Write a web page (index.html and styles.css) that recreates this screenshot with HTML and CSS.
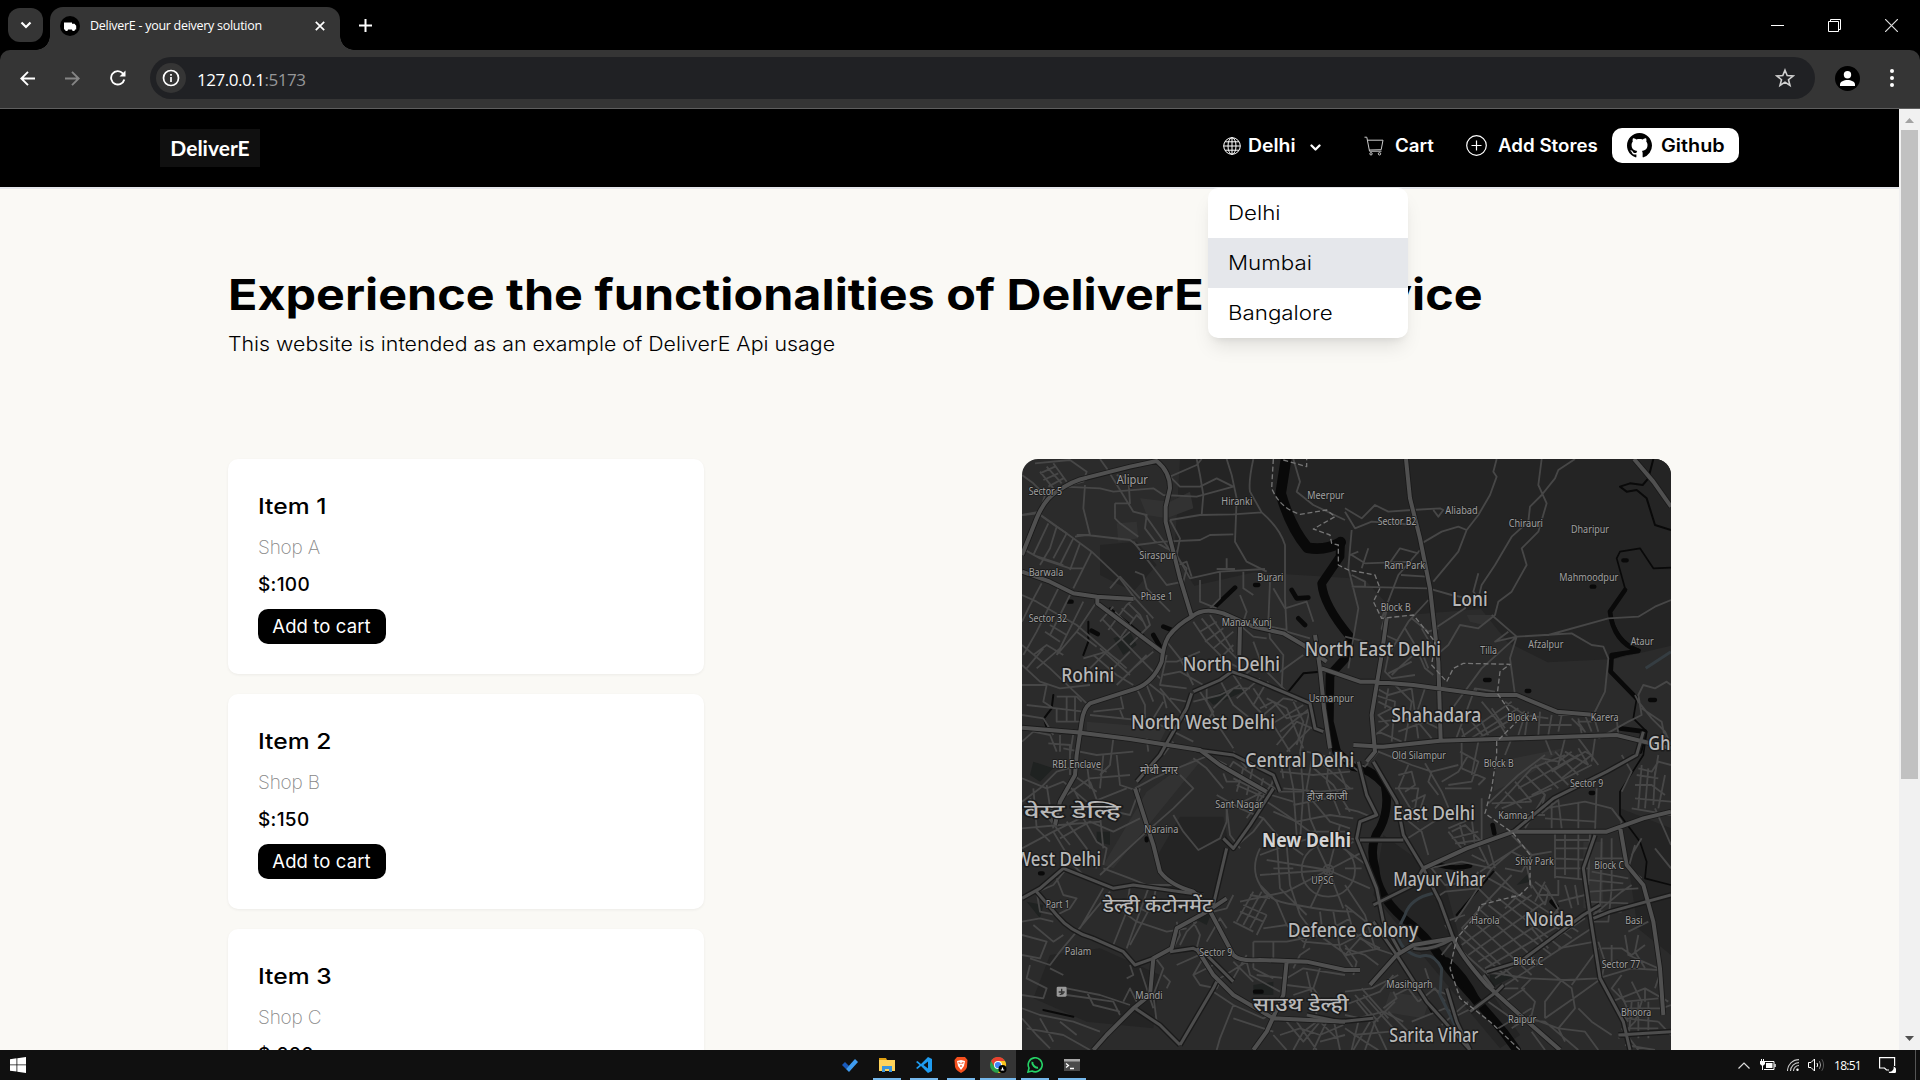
FILE: index.html
```html
<!DOCTYPE html>
<html lang="en">
<head>
<meta charset="utf-8">
<title>DeliverE - your deivery solution</title>
<link rel="stylesheet" href="styles.css">
</head>
<body>
<header class="tabstrip">
  <div class="tab-search"><svg width="12" height="8" viewBox="0 0 12 8"><path d="M1.500 1.500 6 6l4.500-4.500" fill="none" stroke="#fff" stroke-width="2.200"/></svg></div>
  <div class="tab">
    <svg class="favicon" width="20" height="20" viewBox="0 0 20 20"><circle cx="10" cy="10" r="10" fill="#000"/><path d="M4 6.500h8v1.200h2.500l1.700 2V13.500h-1.200a1.500 1.500 0 0 1-3 0H8a1.500 1.500 0 0 1-3 0H4z" fill="#fff"/></svg>
    <span class="tab-title">DeliverE - your deivery solution</span>
    <svg width="10" height="10" viewBox="0 0 10 10"><path d="M.8.8l8.400 8.400M9.200.8.8 9.200" stroke="#fff" stroke-width="1.700"/></svg>
  </div>
  <svg class="new-tab" width="13" height="13" viewBox="0 0 13 13"><path d="M6.500 0v13M0 6.500h13" stroke="#fff" stroke-width="2"/></svg>
  <div class="window-buttons">
    <svg width="13" height="13" viewBox="0 0 13 13"><path d="M0 6.500h13" stroke="#fff"/></svg>
    <svg width="13" height="13" viewBox="0 0 13 13"><path d="M.5 2.500h10v10H.5zM2.500 2.500v-2h10v10h-2" fill="none" stroke="#fff"/></svg>
    <svg width="13" height="13" viewBox="0 0 13 13"><path d="M0 0l13 13M13 0 0 13" stroke="#ddd" stroke-width="1.200"/></svg>
  </div>
</header>
<div class="toolbar">
  <svg class="back" width="15" height="15" viewBox="0 0 15 15"><path d="M15 7.500H1.500M8 .8 1.300 7.500 8 14.200" fill="none" stroke="#fff" stroke-width="1.900"/></svg>
  <svg class="forward" width="15" height="15" viewBox="0 0 15 15"><path d="M0 7.500h13.500M7 .8l6.700 6.700L7 14.200" fill="none" stroke="#858585" stroke-width="1.900"/></svg>
  <svg class="reload" width="16" height="16" viewBox="0 0 16 16"><path d="M14.300 9.500A6.700 6.700 0 1 1 12.800 3.300L14.500 5" fill="none" stroke="#fff" stroke-width="1.900"/><path d="M15.500.500v6h-6z" fill="#fff"/></svg>
  <div class="omnibox">
    <div class="site-info"><svg width="18" height="18" viewBox="0 0 18 18"><circle cx="9" cy="9" r="7.500" fill="none" stroke="#fff" stroke-width="1.700"/><path d="M9 8v5M9 5v1.800" stroke="#fff" stroke-width="1.700"/></svg></div>
    <span class="url">127.0.0.1<span class="port">:5173</span></span>
    <svg class="star" width="20" height="20" viewBox="0 0 20 20"><path d="M10 2.200l2.200 5.400 5.800.4-4.500 3.700 1.500 5.700-5-3.200-5 3.200 1.500-5.700L2 8l5.800-.4z" fill="none" stroke="#d0d0d0" stroke-width="1.600"/></svg>
  </div>
  <svg class="profile" width="25" height="25" viewBox="0 0 25 25"><circle cx="12.500" cy="12.500" r="12.500" fill="#000"/><circle cx="12.500" cy="8.700" r="3.700" fill="#fff"/><path d="M5 20v-1.500c0-3 4-4.500 7.500-4.500s7.500 1.500 7.500 4.500V20z" fill="#fff"/></svg>
  <svg class="menu" width="4" height="18" viewBox="0 0 4 18"><circle cx="2" cy="2" r="2" fill="#fff"/><circle cx="2" cy="9" r="2" fill="#fff"/><circle cx="2" cy="16" r="2" fill="#fff"/></svg>
</div>
<div class="viewport">
  <div class="page">
    <nav class="navbar">
      <div class="logo">DeliverE</div>
      <div class="location">
        <svg width="18" height="18" viewBox="0 0 18 18" fill="none" stroke="#fff"><circle cx="9" cy="9" r="8.300"/><ellipse cx="9" cy="9" rx="4" ry="8.300"/><path d="M9 .7v16.600M.7 9h16.600M2 4.800h14M2 13.200h14"/></svg>
        <span class="nav-delhi">Delhi</span>
        <svg class="chevron" width="11" height="8" viewBox="0 0 11 8"><path d="M1.500 1.500l4 4 4-4" fill="none" stroke="#fff" stroke-width="2.300" stroke-linecap="round" stroke-linejoin="round"/></svg>
        <div class="dropdown">
          <div class="option"><span>Delhi</span></div>
          <div class="option active"><span>Mumbai</span></div>
          <div class="option"><span>Bangalore</span></div>
        </div>
      </div>
      <div class="cart">
        <svg width="20" height="20" viewBox="0 0 20 20" fill="none" stroke="#ccc"><path d="M.5 1.200h2.300l2.700 14h12M3.500 4.200h15.500l-1.800 9.500-12 .3"/><circle cx="7" cy="17.800" r="1.200"/><circle cx="15.500" cy="17.800" r="1.200"/></svg>
        <span class="nav-cart">Cart</span>
      </div>
      <div class="add-stores">
        <svg width="21" height="21" viewBox="0 0 21 21" fill="none" stroke="#fff" stroke-width="1.200"><circle cx="10.500" cy="10.500" r="9.800"/><path d="M10.500 5.500v10M5.500 10.500h10"/></svg>
        <span class="nav-add">Add Stores</span>
      </div>
      <a class="github">
        <svg width="25" height="25" viewBox="0 0 16 16"><path d="M8 0C3.580 0 0 3.580 0 8c0 3.540 2.290 6.530 5.470 7.590.4.070.55-.17.55-.38 0-.19-.01-.82-.01-1.490-2.010.37-2.530-.49-2.690-.94-.09-.23-.48-.94-.82-1.130-.28-.15-.68-.52-.01-.53.63-.01 1.080.58 1.230.82.72 1.210 1.870.87 2.330.66.070-.52.28-.87.51-1.070-1.780-.2-3.640-.89-3.640-3.950 0-.87.31-1.590.82-2.150-.08-.2-.36-1.020.08-2.120 0 0 .67-.21 2.200.82.64-.18 1.320-.27 2-.27s1.360.09 2 .27c1.530-1.040 2.200-.82 2.200-.82.44 1.100.16 1.920.08 2.120.51.56.82 1.270.82 2.150 0 3.070-1.870 3.750-3.650 3.950.29.25.54.73.54 1.480 0 1.070-.01 1.930-.01 2.200 0 .21.15.46.55.38A8.010 8.010 0 0 0 16 8c0-4.420-3.580-8-8-8z"/></svg>
        <span class="nav-github">Github</span>
      </a>
    </nav>
    <main class="content">
      <h1>Experience the functionalities of DeliverE Api service</h1>
      <p class="subtitle">This website is intended as an example of DeliverE Api usage</p>
      <div class="columns">
        <div class="items">
          <article class="card">
            <h2>Item 1</h2>
            <p class="shop">Shop A</p>
            <p class="price">$:100</p>
            <button class="add">Add to cart</button>
          </article>
          <article class="card">
            <h2>Item 2</h2>
            <p class="shop">Shop B</p>
            <p class="price">$:150</p>
            <button class="add">Add to cart</button>
          </article>
          <article class="card">
            <h2>Item 3</h2>
            <p class="shop">Shop C</p>
            <p class="price">$:200</p>
            <button class="add">Add to cart</button>
          </article>
        </div>
        <svg class="map" width="649" height="591" viewBox="6 12 1947 1773">
          <rect x="6" y="12" width="1947" height="1773" fill="#2b2b2b"/>
          <g class="land">
            <path d="M480 12h1473v560l-170 40-200 10-120-60-80-100-250 20-100-110-330-20-180 40-60-90zM240 270l110-10 60 70-70 80-100-50zM480 1085l130 0 20 100-60 190-100-30-60-140zM90 1500l150-20 180 80-20 160-200-20-160-70zM1090 1140l180 130 60 220 170 250-60 40-250-300-130-160zM1800 1060l153 60v380l-100-80z"/>
          </g>
          <g class="builtup">
            <path d="M360 130l90 10 60-30 10 50-80 30-60-10zM290 205l60-5 5 50-60 10zM200 800l240 20-20 40-220-20zM380 1010l140-100 20 10-260 320-30-10zM1340 480l80 0-30 30-40-10zM1430 920l200-40-90 70-120 60zM1110 1610l120 20-20 60-120-20zM1690 1160l60 0 0 200-60 0z"/>
          </g>
          <g class="park">
            <path d="M280 550l50-20 20 40-40 30zM560 730l100-40 10 20-90 40zM40 920l60 20-40 40-30-20zM230 1130l40 0 0 40-40-10zM520 1390l60-30-20 50zM700 1590l60-10 0 40-60 0zM20 1340l50 10-10 40zM1410 1560l80 0-80 40zM1490 1290l40-40 0 30z"/>
          </g>
          <g class="water">
            <path d="M800 0L782 115Q810 215 862 278Q915 288 962 262" stroke-width="32"/>
            <path d="M962 258L960 305L905 385Q910 450 990 545L985 600L930 660L928 800L950 890L1000 935Q1050 940 1095 990Q1110 1060 1080 1120Q1045 1170 1065 1240Q1070 1320 1150 1390Q1220 1440 1270 1520Q1300 1560 1345 1610Q1400 1670 1450 1730L1490 1785" stroke-width="26"/>
            <path d="M1280 1520Q1330 1560 1370 1640" stroke-width="26"/>
            <path d="M585 455L645 398M400 540l20 35M215 527l18 10M815 405L830 430L865 428M835 490L855 510M1250 1228Q1300 1245 1350 1232M1595 1340l15 15M1418 1110l5 25M430 515l25 10" stroke-width="14"/>
            <path d="M145 440h10M705 390h10M1395 675h14M1520 708h8M1810 316h10M1715 395h8M1712 1014h8M60 1255h8M705 1610h20M380 1150v6M1890 735h15M1230 1655l8 14" stroke-width="13"/>
            <path d="M1900 12L1885 70L1868 90L1830 85L1800 95L1820 110L1850 105L1880 130L1905 210L1953 225" stroke-width="6"/>
            <path d="M1953 338L1900 340L1860 280L1800 290L1790 310L1815 400L1770 470Q1790 560 1860 585L1775 610L1775 655L1850 730L1840 790L1880 830L1870 900L1800 1010L1800 1080L1860 1160L1880 1220L1875 1270L1953 1290" stroke-width="5"/>
            <path d="M1815 405L1770 470Q1780 560 1855 588L1775 600L1772 650L1850 730M1800 820L1875 830L1860 890" stroke-width="14"/>
            <path d="M205 500L205 560L190 600M270 460L370 540M100 720L95 760L72 790L80 820M805 710L850 655L900 650M70 1665l90 20M1310 1380l110-130" stroke-width="6"/>
          </g>
          <g class="minor">
            <path d="M6 60L40 85L75 120L60 170L6 180M45 25L150 15L200 50L190 80L130 95M60 50L100 100M80 35L125 85M100 25L140 80M60 55L105 35M70 75L115 55M85 95L130 70M130 95L240 100L280 110L400 100L430 120L530 125L640 95L590 70L540 95L480 95L450 65L530 30L545 12"/>
            <path d="M240 12L260 40L340 170L380 180L375 220L405 260L440 280L470 290M285 145L330 145L325 70L290 60M285 145L285 190L300 205L355 245M195 90L190 160L210 240L170 240M6 180L55 175L160 250L215 290L300 370L345 430M165 245L200 240L330 255L350 270L430 260L540 255L570 240L640 238M450 195L540 180L640 178L725 172L690 110Q685 80 700 12M620 12L635 60L650 130L645 260L680 320L740 350M725 172Q780 220 795 270L795 430L800 525L750 515"/>
            <path d="M60 180L110 215L90 280L60 330M110 215L140 235L100 310M85 205L40 300M160 250L120 330M180 265L150 345M215 290L160 400M6 280L60 310L150 340L190 340M40 300L130 330M6 420L50 440L100 470L170 510L320 640M65 385L30 450L6 500M115 400L50 530L10 600M150 420L90 540M190 440L120 580L50 640M230 440L170 530L110 600M6 570L90 640L200 745M6 630L60 680L120 700L210 690M40 600L80 570L130 600M90 510L140 540L110 600M75 530L120 560M20 640L70 580M170 530L230 575M190 610L260 590L300 620"/>
            <path d="M245 490L370 620L420 670M285 470L400 580M240 500L280 455M265 525L320 450L345 430L400 490M300 550L350 480L370 500M330 570L390 510L380 480M220 600L290 660L340 690M240 580L330 660M210 640L260 590L330 530M250 670L330 590M290 690L380 600M340 640L400 590M305 460L340 490M325 445L360 480L380 520M375 180L460 300L500 340L490 380L440 390L340 260M345 350L370 360L380 400L450 470M270 400L300 365L360 430"/>
            <path d="M450 195L480 250L470 300L510 370L600 350L735 342M540 375L540 440L590 460M600 350L600 430L570 460M670 350L670 400L700 420M750 380L745 500L750 550L790 600L785 700M760 400L795 460L860 440L880 500M800 530L870 550M660 420L680 470L665 515L700 545L740 550M620 310L620 345M590 342L645 342M475 330L500 320L515 365M530 12L540 60L550 120L545 180M820 12L840 80L830 110L880 150L975 195"/>
            <path d="M520 500L560 560L620 620L660 640M545 490L600 560L650 610M570 480L610 540L640 590M540 530L590 500M555 560L610 520M580 580L640 530M600 610L640 570M440 560L480 610L500 650L520 690M425 620L470 620L540 590M430 660L480 650L550 690M380 680L430 720L440 760M380 690L400 740M300 715L310 760L220 770M350 700L375 750L375 790M440 600L420 690L500 700M420 700L480 770L500 800M450 730L500 740"/>
            <path d="M640 660L700 750L760 810L810 890M600 675L640 750L690 790M560 690L560 740L600 820L640 880M540 710L580 770L560 800M520 740L600 720L660 690M580 760L640 700L690 700M650 730L720 670M700 750L735 690L745 680M730 780L790 730L820 735M750 810L850 750M780 830L870 760M660 670L700 640L780 650L850 600M700 560L730 640L790 700L830 740M740 730L800 760L850 880M720 760L760 740L800 790L870 770M700 700L740 760M820 740L850 800L830 870M870 760L840 890M770 870L830 800L900 830M800 890L870 820"/>
            <path d="M6 860L40 830L90 840L110 890M20 750L110 760L190 770M110 725L170 725L185 740M110 760L110 800L180 800M140 725L140 800M165 725L165 800M6 690L80 690L70 740L100 760M6 780L70 790L100 840M85 865L150 870L150 960M120 840L120 890M160 835L150 900M210 780L400 800L520 860M300 765L310 790M380 850L385 890M400 790L430 740M280 850L270 930L240 960M460 860L430 900"/>
            <path d="M6 970L80 1000L130 980L200 1040L270 1060M6 1040L60 1000L110 950L180 930L260 950M30 1030L60 1080L110 1060M6 1120L120 1110L240 1100M40 1000L50 1120L90 1160M80 990L100 1120M6 1180L100 1130L180 1090M100 1130L160 1230L200 1270M140 1100L200 1180L230 1240M190 1090L230 1160L260 1180L250 1230M240 1080L250 1180M70 1070L150 1170M120 1150L210 1100L280 1130L360 1090M160 1000L200 1080M210 980L240 1060L330 1080L360 1000M200 920L210 1000M250 900L240 1000M290 900L300 990L360 1010M160 960L230 1010M140 1020L210 970L330 960M170 1060L320 1000M130 880L230 900L340 890"/>
            <path d="M345 1000L400 970L470 940L570 900M380 1130L460 1060L520 1000L480 960M460 1080L490 1130L535 1185L600 1150L620 1100L620 1040M240 1260L380 1130M250 1240L330 1270L380 1290L460 1290M200 1270L140 1240L100 1290L6 1330M110 1270L130 1320L170 1330L150 1360L110 1380M50 1310L60 1370L110 1380M6 1400L60 1390L100 1400M6 1440L80 1460L60 1510L6 1500M40 1410L100 1460L130 1440M250 1300L180 1420M270 1310L120 1490L90 1530L30 1510M330 1290L320 1370L280 1470M385 1300L320 1480M410 1290L400 1340L330 1470M310 1370L350 1400L440 1430L500 1420M340 1350L380 1370"/>
            <path d="M30 1530L20 1570L80 1600L70 1630L6 1620M90 1540L130 1560M140 1600L240 1620L330 1650M140 1620L280 1640L300 1680M200 1610L220 1650L300 1670M6 1660L60 1680L160 1700L240 1730M6 1690L50 1740L90 1780M60 1690L100 1760M20 1720L130 1740L210 1785M120 1700L170 1740M310 1640L330 1600L350 1640M330 1530L340 1560L320 1570M400 1500L430 1540L400 1620L410 1700M360 1540L380 1600L400 1660M430 1560L450 1580L440 1600"/>
            <path d="M620 950L640 920L700 960L780 1010L850 1010M640 970L720 1010L820 1040M650 990L740 1030M670 940L650 1010M700 930L680 1020M730 970L710 1040M760 970L740 1040M590 1020L660 1060L730 1090L700 1130L640 1180M620 1060L630 1140L660 1180M650 1050L730 1010M680 1090L760 980M610 1000L560 940L520 910M610 955L620 980L660 980M730 1090L780 1150L850 1200M740 1040L800 1080L870 1130L975 1130M560 900L620 930M640 890L680 940"/>
            <path d="M800 900L820 1000L830 1140M840 890L850 1010L840 1160M880 890L860 1000L870 1090L900 1160M930 890L920 980L960 1080M780 950L880 960L990 950M790 1000L900 1010L1000 1000M820 1050L970 1020M760 1070L830 1100L930 1080L1000 1090M900 920L990 1000M870 930L940 990L990 1070M860 890L980 920L1030 960L1040 1010M940 900L980 1000M780 900L790 970M880 1040L930 1100L990 1120"/>
            <path d="M925 1245m-80 0a80 80 0 1 0 160 0a80 80 0 1 0-160 0M925 1245m-15 0a15 15 0 1 0 30 0a15 15 0 1 0-30 0M925 1245L740 1215M925 1245L720 1260M925 1245L800 1310L660 1340M925 1245L880 1150M925 1245L960 1110M925 1245L1030 1190M925 1245L1050 1300M925 1245L970 1360M925 1245L870 1360M720 1180Q690 1240 720 1290Q740 1340 830 1350Q930 1370 1000 1370M800 1170L810 1290L840 1380M770 1150L780 1300L860 1380M720 1200L800 1170L870 1150M720 1290L770 1340L800 1410M820 1240L760 1240M1000 1160L970 1180L1040 1230"/>
            <path d="M700 1310L650 1400M725 1310L670 1410M745 1320L690 1420M740 1380L710 1440M690 1320L750 1330M670 1350L740 1380M660 1370L730 1400M640 1400L700 1430M640 1320L620 1360L580 1370M700 1460L700 1540M760 1460L760 1510M730 1420L800 1410L850 1460L960 1470L1040 1430M700 1460L800 1460L900 1440L990 1390M840 1380L870 1420L850 1480M900 1370L910 1450L980 1500L1080 1480M940 1370L960 1480L1000 1540M980 1360L1000 1430L1060 1480M870 1480L840 1500L820 1540"/>
            <path d="M480 1470L500 1430L530 1400M520 1400L540 1440L530 1480M560 1460L600 1390L620 1420M470 1530L560 1490L520 1560L540 1590L590 1600L600 1580M520 1560L580 1530M460 1480L480 1440L470 1400M600 1570L680 1520L690 1560L780 1610M640 1520L700 1580M680 1500L640 1570M700 1540L760 1570M640 1650L600 1750L590 1785M580 1610L640 1650L730 1690L800 1650L850 1640M640 1690L760 1730M710 1560L800 1570L850 1540L975 1560M800 1590L880 1600L920 1660L975 1640M820 1620L880 1600L900 1540M860 1550L890 1680"/>
            <path d="M800 1700L850 1760L900 1700L950 1750M780 1740L840 1720L900 1740L970 1710M820 1785L850 1730L890 1700M880 1785L920 1700M830 1700L890 1785M940 1690L960 1785M760 1740L800 1785M900 1760L975 1740M975 1650L1080 1610L1120 1560M975 1700L1090 1670L1150 1700M1010 1640L1060 1700L1100 1785M1030 1620L1120 1720M1000 1740L1110 1730M1000 1785L1050 1700M1090 1660L1130 1630L1120 1610M975 1470L1010 1520L1000 1560M975 1500L1020 1450L1080 1480"/>
          </g>
          <g class="minor" transform="translate(975 0)">
            <path d="M455 12L445 50L455 65L435 120L400 180L365 225L340 290L290 350L265 380M590 12L580 90L605 145L580 230L530 280L545 330L500 410L460 440L450 480L400 520L345 510L310 570L275 600M690 12L640 45L630 70L590 120L555 155L550 200L500 245L450 330L410 390L400 430M0 160L50 190L90 150L130 170L200 165L285 160L295 165L280 185L265 165M0 170L30 220L80 200L210 210M20 225L10 340L40 460L10 640M20 300L60 325L200 320M70 280L50 340M15 300L40 290M230 265L290 230L340 215L365 225M130 330L165 280L220 295M20 395L250 400L320 420L370 430L360 460L270 520M20 360L60 380L60 395L20 395"/>
            <path d="M225 285L160 360L110 490M110 490L130 450L110 520L120 540L230 590L250 640M250 435L190 500L130 600L120 650L140 670L210 660M180 520L210 570L240 640L265 660M200 490L250 530L280 520M230 520L270 590M140 660L160 640L250 560M130 655L200 620M400 355L385 410L400 430M440 480L515 545L600 540L680 535L740 570L775 575L790 610L780 710L745 780L760 830M515 545L495 610L510 720M515 545L450 560L490 530M515 545L410 640L300 790M610 540L790 490L880 485L930 455L978 435M395 700L390 715M350 820L360 850M168 360L245 365M0 545L60 560"/>
            <path d="M350 845L500 740M370 855L520 760M400 850L540 770M330 860L390 700L450 710M410 740L460 800L490 850M440 760L480 820M400 780L430 840M480 740L540 780L520 840M380 800L420 850M550 770L540 840M585 770L580 840M620 780L610 840M580 810L680 810M650 780L640 830M680 790L720 830L700 800L740 800M700 790L710 835M540 780L610 790M640 780L720 780L740 830M95 700L130 720L200 700M100 740L140 760L100 780L130 810L90 840M130 700L120 760M150 690L200 740L180 860M200 700L220 850M240 700L210 790L260 850M90 720L150 740L140 860M100 800L200 790M160 830L240 800L280 820M100 830L170 860"/>
            <path d="M760 850L850 800L890 780L880 720L895 690L930 700L965 680L978 690M870 720L880 740L920 790L960 830L978 870M890 760L950 800L960 850M815 790L820 840M600 850L620 900M660 850L640 930M700 850L760 930M750 850L740 920M500 850L480 900M350 860L350 940M400 860L380 960"/>
            <path d="M0 910L60 935L100 890L200 930L260 950L340 930M240 925L290 1010L320 1080M260 950L250 980L280 1020M190 930L160 1000L220 1100M160 960L200 950L210 990L180 1010M150 1000L220 1000L210 1060L170 1070M345 890L400 920L380 980L310 990M350 940L420 970L400 990M290 980L340 950L370 900M300 1000L380 1000M200 1040L240 1020L220 1080M180 1090L230 1130L250 1200M180 1155L330 1060M320 1130L360 1110L410 1160M310 1120L380 1090L390 1170M345 1110L360 1170M320 1150L400 1130M330 1165L405 1155M310 1130L350 1180"/>
            <path d="M430 1045L520 960L600 900M450 1060L560 940L660 900M440 1045L560 1040M470 1060L620 1000M480 1010L530 1060M510 980L560 1040M540 960L600 1020M570 930L640 1000M600 920L670 990M630 890L700 960M660 890L730 930M520 1000L700 900M560 1020L740 930M590 910L640 920L680 890M620 950L720 890L740 900M650 970L740 900M700 880L730 930M600 1060L720 1040L800 1060M590 1075L640 1035L650 1120M600 1090L750 1100M620 1040L620 1120M700 1040L700 1120M755 1000L750 1130M545 1080L600 1080M410 1030L410 1170"/>
            <path d="M630 1135L630 1270M660 1135L660 1260M700 1135L700 1270M735 1135L730 1290M770 1150L765 1380M800 1150L800 1300M630 1155L750 1155M630 1180L735 1180M630 1210L735 1215M630 1240L735 1240M630 1265L835 1285M720 1340L850 1345M740 1370L830 1370M735 1310L880 1300M750 1210L840 1210M740 1250L850 1270M745 1380L830 1310L860 1290M800 1300L790 1400L740 1400M640 1275L640 1320L580 1320M570 1280L610 1310L600 1350M600 1280L570 1340"/>
            <path d="M405 1250L530 1170M440 1240L500 1190L540 1210L560 1300M450 1250L520 1320L480 1360M430 1270L540 1330M330 1400L440 1240M350 1420L500 1260M260 1240L300 1290L380 1280L400 1250M250 1240L350 1220L440 1240M480 1240L530 1250L560 1200M500 1140L560 1200L620 1190M400 1170L430 1230M430 1170L450 1240M380 1200L420 1220M270 1330L300 1310L400 1300L440 1340"/>
            <path d="M350 1420L520 1580M375 1390L560 1560M400 1360L590 1530M430 1350L620 1500M460 1330L650 1480M500 1320L680 1450M530 1320L700 1430M350 1470L560 1320M370 1500L600 1340M400 1520L640 1370M420 1540L680 1390M450 1570L720 1390M480 1590L740 1420M330 1470L430 1560M340 1440L480 1560M600 1290L640 1360L610 1400M560 1290L600 1350M640 1340L720 1320M660 1290L680 1360M690 1290L700 1350M560 1420L610 1480M300 1410L330 1450L290 1500M300 1400L360 1380"/>
            <path d="M420 1550L550 1570L660 1575L760 1570L860 1540L940 1545M560 1570L530 1600L570 1640L560 1680L500 1720M520 1600L460 1600L440 1620M600 1540L680 1600L690 1660L640 1720L660 1760M640 1480L750 1460M680 1590L760 1480M600 1690L700 1620L770 1570L800 1640L850 1700M700 1660L740 1700L800 1740M650 1575L600 1640L600 1690M560 1690L640 1720M460 1720L560 1660M480 1640L540 1600M430 1640L500 1690L600 1700L700 1785M640 1720L720 1730L760 1785M560 1730L600 1785M770 1480L830 1480L860 1500L900 1470M800 1470L800 1540M840 1440L850 1500L940 1540M880 1440L870 1490L900 1540M760 1460L780 1520L770 1570M850 1430L910 1400M830 1560L800 1600L840 1640L940 1630"/>
            <path d="M800 1640L900 1600L970 1640M860 1580L890 1640L870 1700M820 1600L860 1690M830 1660L950 1660M840 1690L940 1700M850 1720L940 1720M860 1640L850 1760M880 1640L880 1750M910 1640L910 1750M820 1750L870 1700M830 1720L880 1785M900 1600L900 1640M840 1770L930 1785M930 1600L950 1540M940 1700L978 1740M950 1660L978 1650"/>
            <path d="M880 940L920 950L940 920L978 930M870 990L920 990L960 1020M890 930L880 1060M910 940L900 1060M930 950L925 1050M875 960L940 970M870 1030L978 1040M860 1060L978 1080M940 900L930 960M830 900L860 950L830 1010M960 960L940 1060M870 1170L850 1240L890 1270M800 1060L830 1100L820 1130M930 1060L978 1170M930 1180L978 1240M860 1200L890 1150M540 1120L600 1020L590 1060"/>
            <path d="M0 1060L40 1070L90 1090M0 1150L80 1155M0 1240L50 1240M0 1290L60 1380L90 1480L150 1500M0 1350L100 1430M0 1480L60 1500L100 1530M160 1560L80 1600L0 1610M0 1680L90 1700L150 1640M30 1620L100 1700M50 1600L130 1690M0 1720L60 1760L100 1785M40 1700L20 1785M90 1700L60 1785M130 1670L200 1740M150 1620L190 1600L220 1640M200 1700L300 1660L340 1680L420 1640M220 1640L270 1600L300 1640M290 1710L370 1640M240 1540L260 1600L310 1620"/>
          </g>
          <g class="canal">
            <path d="M1240 1315Q1170 1330 1155 1380L1130 1430Q1140 1490 1200 1505Q1240 1490 1265 1540L1260 1620L1320 1740"/>
            <path d="M1877 640L1953 590"/>
          </g>
          <g class="casing">
            <path id="trunks" d="M6 300L50 190Q75 130 110 110Q160 75 200 68L330 35L410 18Q450 50 450 100L437 155L437 200L465 310L480 370L515 485Q470 510 445 545Q430 570 425 620Q400 680 350 700L210 745Q190 760 185 800L170 900L165 960L120 1040L105 1110M515 485Q550 455 610 475L700 515L790 535L850 570L920 620M1158 12L1170 130L1200 250L1230 400L1255 620L1262 855M1842 12L1900 80L1953 155M1100 490L1085 600L1055 780L1065 890L1040 920M6 818L170 832L330 852L540 885L600 930L740 1010M885 540L900 640L912 760L930 880M905 640L1020 680L1060 680L1180 690L1400 720L1490 720L1610 770L1725 780M1000 870L1090 875L1260 857L1500 850L1790 840L1953 880M345 1000L400 1170L420 1250Q450 1290 520 1310L560 1350L640 1500Q660 1520 720 1515L860 1520L975 1545L1020 1545M220 1785L260 1740L300 1700L340 1660L390 1620L400 1510L455 1480L470 1420L560 1370L620 1330M800 1520L790 1620L740 1730L700 1785M1210 1240L1340 1180L1480 1130L1760 1130L1870 1090L1953 1070M1800 1115L1820 1230L1870 1290L1900 1400L1920 1540L1930 1680M530 1480L580 1560L640 1620L760 1690L975 1700M1050 1590L1130 1500L1180 1470L1300 1450Q1320 1500 1400 1590L1500 1680L1620 1785M6 350L90 380L160 415L230 425L340 432M232 430L232 445L425 590M660 515L658 600"/>
            <path id="arteries" d="M515 715L500 760L420 900L350 980M520 710L600 675L635 650L680 665L800 715L870 745L885 820L910 830M6 1330L60 1300L130 1240L280 1300L340 1290L550 1320M50 1310L110 1380Q150 1430 220 1450L310 1490L345 1530L400 1510M480 1770L580 1600L590 1580M345 1660L420 1710L480 1770M1015 920L1040 1020L1070 1080L1020 1100L1010 1150L1070 1300L1090 1400L1140 1490M1060 920L1130 1040L1150 1140L1210 1240L1260 1340L1300 1450M1020 1155L1150 1155M1060 1350L1180 1290L1210 1240M1400 1550L1500 1520L1690 1380L1740 1350M1390 1560L1420 1600M1725 1140L1690 1240L1710 1380L1740 1570M1720 1390L1770 1370L1953 1320M1480 1130L1600 1030L1760 950L1850 900L1870 830M1350 1670L1430 1610L1450 1590M1060 1400L1130 1500L1220 1640L1350 1785M1180 1480Q1230 1490 1300 1450M1280 1600L1310 1700L1350 1785M610 1150L640 1180L690 1110L760 1000M620 1180L580 1350M450 1490L520 1480L560 1500L640 1580M860 1680L960 1700L1060 1690M530 885L640 900L760 960L780 1010M1740 1570L1810 1700L1830 1785M1795 1740L1953 1730"/>
          </g>
          <use href="#trunks" class="trunk"/>
          <use href="#arteries" class="artery"/>
          <g class="boundary">
            <path d="M760 12L755 100Q780 160 840 178L920 165L945 185L880 222L930 240L935 265L955 270L955 330L985 345L1065 360L1080 400L1060 440L1085 490L1180 480L1245 560L1235 630L1280 680L1300 640L1330 625L1470 628L1440 650L1432 715L1490 800L1430 860L1430 900L1415 1000L1395 1075L1480 1135L1530 1200L1530 1290L1500 1320L1380 1350L1370 1380L1310 1450L1290 1540L1320 1630L1410 1700L1500 1785M790 15L860 35V12"/>
          </g>
          <rect x="110" y="1595" width="30" height="30" rx="4" fill="#9a9a9a"/>
          <path d="M116 1611h18M125 1601v18M119 1619l12-4" stroke="#333" stroke-width="4"/>
          <g class="places">
            <text x="290" y="87" textLength="94" lengthAdjust="spacingAndGlyphs" class="mid">Alipur</text>
            <text x="26" y="119" textLength="100" lengthAdjust="spacingAndGlyphs">Sector 5</text>
            <text x="604" y="149" textLength="93" lengthAdjust="spacingAndGlyphs">Hiranki</text>
            <text x="862" y="131" textLength="111" lengthAdjust="spacingAndGlyphs">Meerpur</text>
            <text x="358" y="312" textLength="107" lengthAdjust="spacingAndGlyphs">Siraspur</text>
            <text x="26" y="362" textLength="104" lengthAdjust="spacingAndGlyphs">Barwala</text>
            <text x="712" y="379" textLength="78" lengthAdjust="spacingAndGlyphs">Burari</text>
            <text x="362" y="435" textLength="96" lengthAdjust="spacingAndGlyphs">Phase 1</text>
            <text x="26" y="501" textLength="115" lengthAdjust="spacingAndGlyphs">Sector 32</text>
            <text x="605" y="514" textLength="150" lengthAdjust="spacingAndGlyphs">Manav Kunj</text>
            <text x="866" y="741" textLength="135" lengthAdjust="spacingAndGlyphs">Usmanpur</text>
            <text x="1276" y="177" textLength="97" lengthAdjust="spacingAndGlyphs">Aliabad</text>
            <text x="1073" y="209" textLength="116" lengthAdjust="spacingAndGlyphs">Sector B2</text>
            <text x="1466" y="215" textLength="103" lengthAdjust="spacingAndGlyphs">Chirauri</text>
            <text x="1653" y="234" textLength="114" lengthAdjust="spacingAndGlyphs">Dharipur</text>
            <text x="1093" y="343" textLength="122" lengthAdjust="spacingAndGlyphs">Ram Park</text>
            <text x="1618" y="379" textLength="177" lengthAdjust="spacingAndGlyphs">Mahmoodpur</text>
            <text x="1082" y="467" textLength="90" lengthAdjust="spacingAndGlyphs">Block B</text>
            <text x="1381" y="598" textLength="50" lengthAdjust="spacingAndGlyphs">Tilla</text>
            <text x="1525" y="578" textLength="105" lengthAdjust="spacingAndGlyphs">Afzalpur</text>
            <text x="1832" y="571" textLength="69" lengthAdjust="spacingAndGlyphs">Ataur</text>
            <text x="1462" y="798" textLength="89" lengthAdjust="spacingAndGlyphs">Block A</text>
            <text x="1712" y="798" textLength="84" lengthAdjust="spacingAndGlyphs">Karera</text>
            <text x="97" y="938" textLength="146" lengthAdjust="spacingAndGlyphs">RBI Enclave</text>
            <text x="360" y="958" textLength="114" lengthAdjust="spacingAndGlyphs">मोथी नगर</text>
            <text x="860" y="1035" textLength="123" lengthAdjust="spacingAndGlyphs">हौज़ काजी</text>
            <text x="586" y="1059" textLength="143" lengthAdjust="spacingAndGlyphs">Sant Nagar</text>
            <text x="373" y="1134" textLength="102" lengthAdjust="spacingAndGlyphs">Naraina</text>
            <text x="874" y="1286" textLength="67" lengthAdjust="spacingAndGlyphs">UPSC</text>
            <text x="77" y="1358" textLength="72" lengthAdjust="spacingAndGlyphs">Part 1</text>
            <text x="134" y="1500" textLength="80" lengthAdjust="spacingAndGlyphs">Palam</text>
            <text x="538" y="1503" textLength="99" lengthAdjust="spacingAndGlyphs">Sector 9</text>
            <text x="346" y="1633" textLength="82" lengthAdjust="spacingAndGlyphs">Mandi</text>
            <text x="1115" y="913" textLength="163" lengthAdjust="spacingAndGlyphs">Old Silampur</text>
            <text x="1391" y="935" textLength="90" lengthAdjust="spacingAndGlyphs">Block B</text>
            <text x="1650" y="995" textLength="100" lengthAdjust="spacingAndGlyphs">Sector 9</text>
            <text x="1435" y="1093" textLength="110" lengthAdjust="spacingAndGlyphs">Kamna 1</text>
            <text x="1486" y="1229" textLength="115" lengthAdjust="spacingAndGlyphs">Shiv Park</text>
            <text x="1723" y="1242" textLength="89" lengthAdjust="spacingAndGlyphs">Block C</text>
            <text x="1354" y="1408" textLength="85" lengthAdjust="spacingAndGlyphs">Harola</text>
            <text x="1816" y="1407" textLength="52" lengthAdjust="spacingAndGlyphs">Basi</text>
            <text x="1480" y="1531" textLength="90" lengthAdjust="spacingAndGlyphs">Block C</text>
            <text x="1745" y="1539" textLength="116" lengthAdjust="spacingAndGlyphs">Sector 77</text>
            <text x="1099" y="1599" textLength="139" lengthAdjust="spacingAndGlyphs">Masihgarh</text>
            <text x="1464" y="1703" textLength="85" lengthAdjust="spacingAndGlyphs">Raipur</text>
            <text x="1803" y="1684" textLength="91" lengthAdjust="spacingAndGlyphs">Bhoora</text>
          </g>
          <g class="districts">
            <text x="124" y="682" textLength="159" lengthAdjust="spacingAndGlyphs">Rohini</text>
            <text x="488" y="648" textLength="292" lengthAdjust="spacingAndGlyphs">North Delhi</text>
            <text x="333" y="822" textLength="432" lengthAdjust="spacingAndGlyphs">North West Delhi</text>
            <text x="854" y="602" textLength="409" lengthAdjust="spacingAndGlyphs">North East Delhi</text>
            <text x="1296" y="453" textLength="107" lengthAdjust="spacingAndGlyphs">Loni</text>
            <text x="1114" y="801" textLength="270" lengthAdjust="spacingAndGlyphs">Shahadara</text>
            <text x="1885" y="884" textLength="66" lengthAdjust="spacingAndGlyphs">Gh</text>
            <text x="676" y="935" textLength="327" lengthAdjust="spacingAndGlyphs">Central Delhi</text>
            <text x="12" y="1090" textLength="290" lengthAdjust="spacingAndGlyphs">वेस्ट डेल्हि</text>
            <text x="-14" y="1232" textLength="257" lengthAdjust="spacingAndGlyphs">West Delhi</text>
            <text x="726" y="1175" textLength="267" lengthAdjust="spacingAndGlyphs" class="capital">New Delhi</text>
            <text x="248" y="1370" textLength="330" lengthAdjust="spacingAndGlyphs">डेल्ही कंटोनमेंट</text>
            <text x="803" y="1445" textLength="392" lengthAdjust="spacingAndGlyphs">Defence Colony</text>
            <text x="700" y="1667" textLength="286" lengthAdjust="spacingAndGlyphs">साउथ डेल्ही</text>
            <text x="1119" y="1096" textLength="246" lengthAdjust="spacingAndGlyphs">East Delhi</text>
            <text x="1120" y="1293" textLength="276" lengthAdjust="spacingAndGlyphs">Mayur Vihar</text>
            <text x="1514" y="1413" textLength="148" lengthAdjust="spacingAndGlyphs">Noida</text>
            <text x="1108" y="1760" textLength="267" lengthAdjust="spacingAndGlyphs">Sarita Vihar</text>
          </g>
        </svg>
      </div>
    </main>
  </div>
  <div class="scrollbar">
    <svg width="9" height="5" viewBox="0 0 9 5"><path d="M4.500 0 9 5H0z" fill="#a3a3a3"/></svg>
    <div class="thumb"></div>
    <svg class="down" width="9" height="5" viewBox="0 0 9 5"><path d="M4.500 5 9 0H0z" fill="#505050"/></svg>
  </div>
</div>
<footer class="taskbar">
  <svg class="start" width="16" height="16" viewBox="0 0 16 16" fill="#fff"><path d="M0 2.200 6.500 1.300V7.500H0zM7.300 1.200 16 0v7.500H7.300zM0 8.300h6.500v6.200L0 13.700zM7.300 8.300H16V16l-8.700-1.200z"/></svg>
  <div class="apps">
    <div class="app"><svg width="16" height="14" viewBox="0 0 16 14"><path d="M0 7l3-3 4 4-3 3z" fill="#185abd"/><path d="M4 11 13 1l3 3-9 10z" fill="#3f9cf0"/></svg></div>
    <div class="app open"><svg width="16" height="14" viewBox="0 0 16 14"><path d="M0 0h7l1 2H0z" fill="#e0a010"/><path d="M0 2h16v11H0z" fill="#ffd35a"/><path d="M3 14V8h10v6h-3v-3H6v3z" fill="#3a95dc"/></svg></div>
    <div class="app open"><svg width="16" height="16" viewBox="0 0 16 16"><path d="M12 0l4 2v12l-4 2-7-7-3.500 3L0 11l3.500-3L0 5l1.500-1L5 7zM12 4.500 7.500 8l4.500 3.500z" fill="#1f9cf0" fill-rule="evenodd"/></svg></div>
    <div class="app open"><svg width="14" height="16" viewBox="0 0 14 16"><path d="M3 0h8l2.500 3-.5 7c-1 3-3 4.500-6 6-3-1.500-5-3-6-6L.5 3z" fill="#f5501e"/><path d="M3 4l4-1 4 1-1 5-3 4-3-4z" fill="#fff"/><path d="M4.500 5.500l2 1M9.500 5.500l-2 1M7 8v2" stroke="#f5501e" stroke-width="1.200"/></svg></div>
    <div class="app open current"><svg width="17" height="16" viewBox="0 0 17 16"><circle cx="8" cy="8" r="8" fill="#2ba24c"/><path d="M1 4a8 8 0 0 1 14 0H8a4 4 0 0 0-3.500 6z" fill="#e8402f"/><path d="M8 4h7a8 8 0 0 1-7 12l3.500-6z" fill="#fcc31e"/><circle cx="8" cy="8" r="4" fill="#fff"/><circle cx="8" cy="8" r="3.100" fill="#4285f4"/><circle cx="12.500" cy="12" r="4" fill="#000"/><path d="M10.800 13h3.400M12.500 10.500v3" stroke="#fff" stroke-width="1.200"/></svg></div>
    <div class="app open"><svg width="16" height="16" viewBox="0 0 16 16" fill="none" stroke="#25d366"><path d="M1 15l1-4a7 7 0 1 1 3 3z" stroke-width="1.600"/><path d="M5.500 4.800c-1 2.700 2.800 6.500 5.500 5.700" stroke-width="2"/></svg></div>
    <div class="app open"><svg width="16" height="12" viewBox="0 0 16 12"><path d="M0 0h16v12H0z" fill="#4a4a4a"/><path d="M0 0h16v2.500H0z" fill="#a8a8a8"/><path d="M2 4.500 4.500 6.500 2 8.500M6 9.500h4" fill="none" stroke="#fff" stroke-width="1.300"/></svg></div>
  </div>
  <div class="tray">
    <svg class="up" width="12" height="7" viewBox="0 0 12 7"><path d="M.5 6.500 6 1l5.500 5.500" fill="none" stroke="#ddd" stroke-width="1.200"/></svg>
    <svg class="battery" width="16" height="12" viewBox="0 0 16 12"><path d="M4.500 2.500h9.500v8H4" fill="none" stroke="#fff"/><path d="M6 4h6.500v5H6zM14.500 5h1.200v3h-1.200zM0 2h5v3L3.500 6.500h-2L0 5zM1 0h1v2H1zM3 0h1v2H3zM2 6h1v5H2z" fill="#fff"/></svg>
    <svg class="wifi" width="12" height="12" viewBox="0 0 12 12" fill="none" stroke="#ccc" stroke-width="1.100"><path d="M.5 12A11.500 11.500 0 0 1 12 .6M3.500 12A8.500 8.500 0 0 1 12 3.600M6.500 12A5.500 5.500 0 0 1 12 6.500"/><circle cx="10.500" cy="10.700" r="1.200" fill="#fff" stroke="none"/></svg>
    <svg class="volume" width="17" height="14" viewBox="0 0 17 14" fill="none" stroke="#fff"><path d="M.5 4.500h2.500L6.500 1v12L3 9.500H.5z"/><path d="M9 5q1.200 2 0 4"/><path d="M11.500 3.200q2.300 3.800 0 7.600" stroke="#999"/><path d="M13.800 1.200q3.600 5.800 0 11.600" stroke="#555"/></svg>
    <span class="clock">18:51</span>
    <svg class="action" width="17" height="16" viewBox="0 0 17 16"><path d="M10 13H7.500L5.500 11H.6V.6h15V9" fill="none" stroke="#fff" stroke-width="1.200"/><path d="M14.500 9.500a4 4 0 1 1-5 5 4 4 0 0 0 5-5z" fill="#fff"/></svg>
    <div class="peek"></div>
  </div>
</footer>
</body>
</html>
```
FILE: styles.css
```css
* { box-sizing: border-box; margin: 0; padding: 0; }
body { width: 1920px; height: 1080px; overflow: hidden; display: flex; flex-direction: column; background: #000; font-family: Inter, sans-serif; color: #000; white-space: nowrap; }
svg { flex: none; display: block; }

/* Browser chrome */
.tabstrip { height: 50px; flex: none; display: flex; align-items: center; padding-left: 8px; background: #000; }
.tab-search { width: 35px; height: 34px; border-radius: 12px; background: #353535; display: flex; align-items: center; justify-content: center; }
.tab { position: relative; width: 290px; height: 43px; margin: 7px 0 0 7px; padding: 0 15px 6px 10px; border-radius: 13px 13px 0 0; background: #353535; display: flex; align-items: center; }
.tab::before, .tab::after { content: ""; position: absolute; bottom: 0; width: 14px; height: 14px; }
.tab::before { left: -14px; background: radial-gradient(circle at 0 0, transparent 13.500px, #353535 14px); }
.tab::after { right: -14px; background: radial-gradient(circle at 100% 0, transparent 13.500px, #353535 14px); }
.tab-title { flex: 1; margin-left: 10px; font: 12.500px "Open Sans", sans-serif; letter-spacing: -.28px; color: #fff; }
.new-tab { margin-left: 19px; }
.window-buttons { margin-left: auto; margin-right: 22px; display: flex; gap: 44px; }
.toolbar { height: 59px; flex: none; display: flex; align-items: center; padding: 0 25px 2px 20px; background: #353535; border-bottom: 1px solid #5f5f5f; border-radius: 10px 10px 0 0; }
.forward { margin-left: 30px; }
.reload { margin-left: 30px; }
.omnibox { width: 1665px; height: 42px; margin-left: 24px; padding: 0 20px 0 6px; border-radius: 21px; background: #202124; display: flex; align-items: center; }
.site-info { width: 30px; height: 30px; border-radius: 50%; background: #353535; display: flex; align-items: center; justify-content: center; }
.url { flex: 1; margin-left: 11px; padding-top: 2px; font: 17px "Open Sans", sans-serif; letter-spacing: -.47px; color: #fff; }
.port { color: #969799; }
.profile { margin-left: 20px; }
.menu { margin-left: 30px; }

/* Page area */
.viewport { height: 941px; flex: none; display: flex; }
.page { width: 1899px; height: 941px; overflow: hidden; background: #faf9f5; }
.navbar { height: 80px; padding: 0 160px 5px; background: #000; border-bottom: 2px solid #e5e7eb; color: #fff; display: flex; align-items: center; font-size: 18px; font-weight: 600; }
.navbar span { transform-origin: 0 50%; }
.logo { width: 100px; height: 38px; margin-top: 4px; margin-right: auto; background: #101010; font: 700 21px/37px Lato, sans-serif; text-align: center; }
.location { position: relative; width: 98px; display: flex; align-items: center; }
.nav-delhi { margin-left: 7px; transform: scaleX(1.080); }
.chevron { margin: 4px 0 0 auto; }
.dropdown { position: absolute; z-index: 2; left: -15px; top: 53px; width: 200px; border-radius: 10px; overflow: hidden; background: #fff; box-shadow: 0 12px 19px -4px rgba(0, 0, 0, .1), 0 5px 8px -5px rgba(0, 0, 0, .1); color: #000; font-size: 19.500px; font-weight: 300; }
.option { height: 50px; padding-left: 20px; line-height: 51px; }
.option span { display: inline-block; transform: scaleX(1.145); }
.option.active { background: #e5e7eb; }
.cart { width: 70px; margin-left: 43px; display: flex; align-items: center; }
.nav-cart { margin-left: 11px; transform: scaleX(1.040); }
.add-stores { width: 131px; margin-left: 32px; display: flex; align-items: center; }
.nav-add { margin-left: 11px; transform: scaleX(1.040); }
.github { width: 127px; height: 35px; margin-left: 15px; padding-left: 15px; border-radius: 10px; background: #fff; color: #000; display: flex; align-items: center; }
.nav-github { margin-left: 9px; transform: scaleX(1.100); }

.content { padding: 77px 228px 0; }
h1, .subtitle, h2 { width: max-content; transform-origin: 0 50%; }
h1 { font-size: 43px; line-height: 56px; font-weight: 700; transform: scaleX(1.127); }
.subtitle { margin-top: 7px; font-size: 19.500px; line-height: 30px; font-weight: 300; transform: scaleX(1.094); }
.columns { margin-top: 100px; display: flex; justify-content: space-between; }
.items { width: 476px; display: flex; flex-direction: column; gap: 20px; }
.card { height: 215px; padding: 30px; border-radius: 10px; background: #fff; box-shadow: 0 1px 3px rgba(0, 0, 0, .06); display: flex; flex-direction: column; align-items: flex-start; }
h2 { font-size: 22px; line-height: 34px; font-weight: 500; transform: scaleX(1.120); }
.shop { margin-top: 10px; font-size: 19px; line-height: 30px; font-weight: 200; letter-spacing: -.19px; color: #888; }
.price { margin-top: 7px; font-size: 19px; line-height: 30px; font-weight: 500; letter-spacing: .31px; }
.add { width: 128px; height: 35px; margin-top: 9px; padding: 0 1px 1px 0; border: 0; border-radius: 10px; background: #000; color: #fff; font: 400 18.500px Inter, sans-serif; letter-spacing: .1px; }

/* Map */
.map { border-radius: 16px 16px 0 0; font-family: "Noto Sans", sans-serif; }
.land { fill: #242424; }
.builtup { fill: #323232; }
.park { fill: #1f2221; }
.water, .minor, .casing, .trunk, .artery, .canal, .boundary { fill: none; stroke-linejoin: round; }
.water { stroke: #090909; stroke-linecap: round; }
.minor { stroke: #474747; stroke-width: 5.500; }
.casing { stroke: #1a1a1a; stroke-width: 17; }
.trunk { stroke: #505050; stroke-width: 12; }
.artery { stroke: #4d4d4d; stroke-width: 9; }
.canal { stroke: #353d42; stroke-width: 9; }
.boundary { stroke: #757575; stroke-width: 4; stroke-dasharray: 15 8; }
.places text, .districts text { paint-order: stroke; stroke: #1c1c1c; stroke-linejoin: round; }
.places { fill: #a0a0a0; font-size: 35px; }
.places text { stroke-width: 6px; }
.places .mid { font-size: 40px; }
.districts { fill: #b8b8b8; font-size: 58px; font-weight: 500; }
.districts text { stroke-width: 9px; }
.districts .capital { fill: #d4d4d4; font-weight: 700; }

.scrollbar { width: 21px; height: 941px; padding: 9px 0; background: #f1f1f1; display: flex; flex-direction: column; align-items: center; }
.thumb { width: 17px; height: 649px; margin-top: 7px; background: #c1c1c1; }
.down { margin-top: auto; }

/* Taskbar */
.taskbar { height: 30px; flex: none; display: flex; align-items: center; background: #101010; }
.start { margin-left: 10px; }
.apps { display: flex; margin-left: 806px; gap: 1px; }
.app { width: 36px; height: 30px; padding: 0 4px; display: flex; align-items: center; justify-content: center; }
.open { background: linear-gradient(#76b9ed, #76b9ed) 50% 100% / 28px 2px no-repeat; }
.current { background: linear-gradient(#76b9ed, #76b9ed) 50% 100% / 36px 2px no-repeat #353535; }
.tray { margin-left: auto; height: 30px; display: flex; align-items: center; }
.battery { margin-left: 10px; }
.wifi { margin-left: 11px; }
.volume { margin-left: 9px; }
.clock { margin-left: 9px; font: 12px "Open Sans", sans-serif; letter-spacing: -.72px; color: #fff; }
.action { margin-left: 18px; }
.peek { width: 1px; height: 30px; margin: 0 4px 0 19px; background: #555; }
```
